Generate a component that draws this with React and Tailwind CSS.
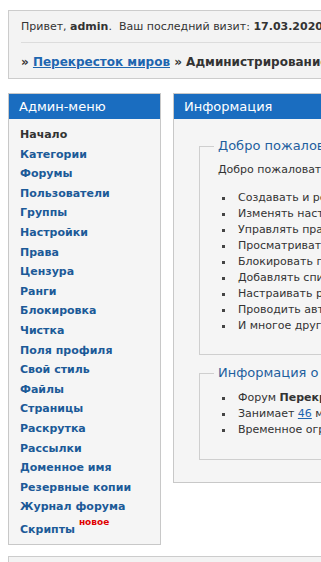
const font = { fontFamily: "Verdana, 'DejaVu Sans', sans-serif" };

const menu = [
    'Категории', 'Форумы', 'Пользователи', 'Группы', 'Настройки', 'Права', 'Цензура',
    'Ранги', 'Блокировка', 'Чистка', 'Поля профиля', 'Свой стиль', 'Файлы', 'Страницы',
    'Раскрутка', 'Рассылки', 'Доменное имя', 'Резервные копии', 'Журнал форума',
];

const abilities = [
    'Создавать и редактировать категории и форумы',
    'Изменять настройки форума',
    'Управлять правами доступа групп пользователей',
    'Просматривать и редактировать профили пользователей',
    'Блокировать пользователей и IP-адреса',
    'Добавлять список запрещённых слов',
    'Настраивать ранги участников',
    'Проводить автоматическую чистку форума',
    'И многое другое',
];

const Bullet = ({ children }) => (
    <li className="flex items-center">
        <span className="w-[3px] h-[3px] bg-[#444] ml-[4px] mr-[13px] shrink-0" />
        <span className="whitespace-nowrap">{children}</span>
    </li>
);

const Box = ({ title, children }) => (
    <fieldset className="border border-[#cfcfcf] px-[18px] m-0 min-w-0">
        <legend className="px-[4px] -ml-[4px] text-[13px] text-[#1f5f9e] leading-[16px] whitespace-nowrap">{title}</legend>
        {children}
    </fieldset>
);

const App = () => {
    return (
        <div className="w-[321px] h-[562px] overflow-hidden bg-white">
            <div className="w-[1000px] pt-[10px] pl-[8px] text-[#333]" style={font}>
                {/* Top bar */}
                <div className="border border-[#cccccc] bg-[#f3f3f3]">
                    <div className="pl-[12px] pt-[8px] pb-[7px] text-[11px] leading-[16px]">
                        Привет, <b>admin</b>.&nbsp; Ваш последний визит: <b>17.03.2020, 14:27</b>
                    </div>
                    <div className="ml-[12px] border-t border-[#dcdcdc]" />
                    <div className="pl-[12px] pt-[11px] pb-[8px] text-[12px] leading-[16px] font-bold">
                        » <a className="text-[#1e66b0] underline">Перекресток миров</a> » Администрирование
                    </div>
                </div>

                <div className="flex items-start gap-[12px] mt-[14px]">
                    {/* Admin menu */}
                    <div className="w-[153px] shrink-0 border border-[#c8c8c8] bg-[#f5f5f5]">
                        <div className="h-[25px] bg-[#1a6dc0] text-white text-[13px] leading-[25px] pl-[10px]">Админ-меню</div>
                        <ul className="pl-[11px] pt-[6px] pb-[5px] text-[11px] font-bold leading-[19.6px]">
                            <li className="text-[#333]">Начало</li>
                            {menu.map(m => (
                                <li key={m} className="text-[#1c5a98]">{m}</li>
                            ))}
                            <li className="text-[#1c5a98] mt-[3px]">
                                Скрипты <sup className="text-[#e00000] text-[9px] font-bold align-[3px]">новое</sup>
                            </li>
                        </ul>
                    </div>

                    {/* Information */}
                    <div className="flex-1 border border-[#c8c8c8] bg-[#f5f5f5]">
                        <div className="h-[25px] bg-[#1a6dc0] text-white text-[13px] leading-[25px] pl-[10px]">Информация</div>
                        <div className="pl-[25px] pr-[25px] pt-[19px] pb-[22px] text-[11px]">
                            <Box title="Добро пожаловать в панель администрирования">
                                <p className="mt-[8px] leading-[16px] whitespace-nowrap">
                                    Добро пожаловать в панель администрирования форума. Здесь вы можете:
                                </p>
                                <ul className="mt-[12px] pb-[20px] leading-[16px]">
                                    {abilities.map(a => <Bullet key={a}>{a}</Bullet>)}
                                </ul>
                            </Box>
                            <div className="h-[10px]" />
                            <Box title="Информация о форуме">
                                <ul className="mt-[9px] pb-[21px] leading-[16px]">
                                    <Bullet>Форум <b>Перекресток миров</b> создан 12.05.2009</Bullet>
                                    <Bullet>Занимает <a className="text-[#1e66b0] underline">46</a> мб дискового пространства</Bullet>
                                    <Bullet>Временное ограничение на регистрацию не установлено</Bullet>
                                </ul>
                            </Box>
                        </div>
                    </div>
                </div>

                <div className="mt-[11px] h-[40px] border border-[#cccccc] bg-[#f3f3f3]" />
            </div>
        </div>
    );
};

export default App;
